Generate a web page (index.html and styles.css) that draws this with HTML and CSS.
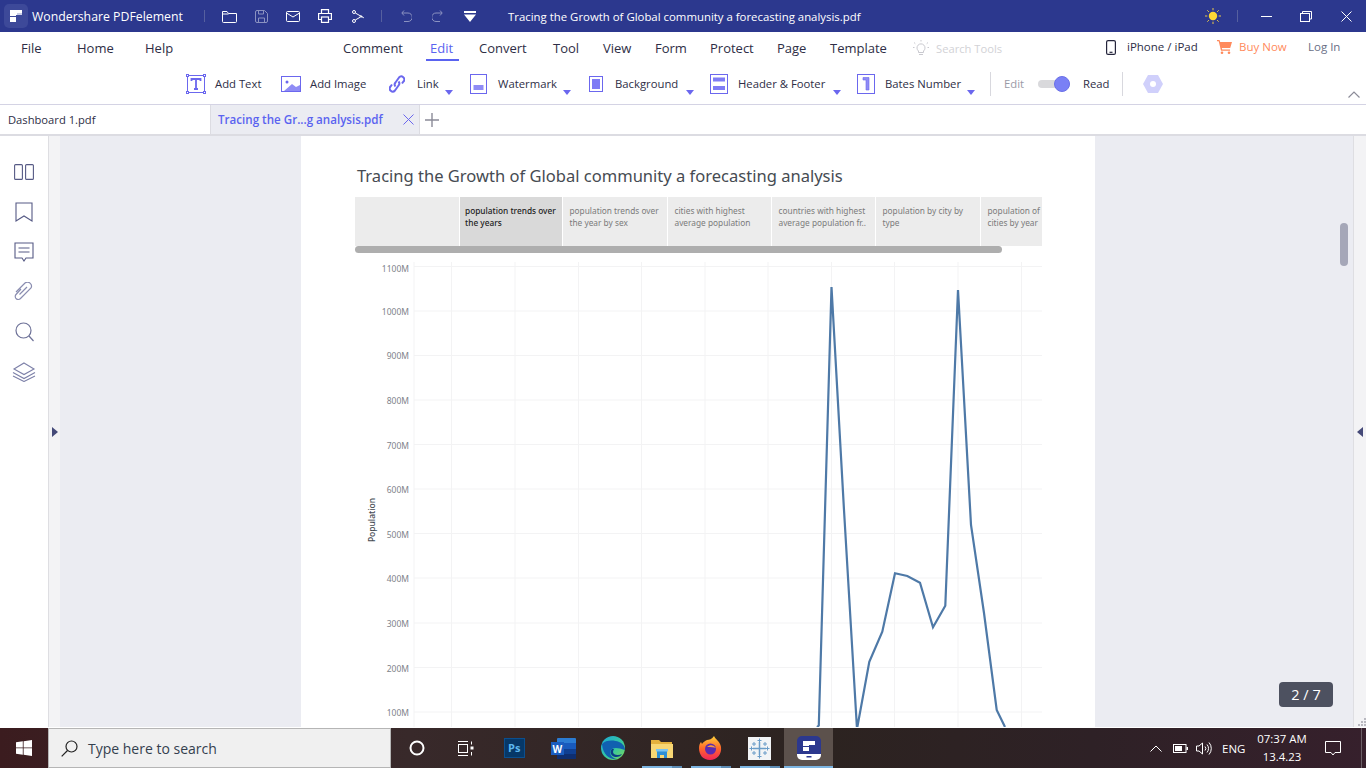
FILE: index.html
```html
<!DOCTYPE html>
<html lang="en">
<head>
<meta charset="utf-8">
<title>Wondershare PDFelement</title>
<link rel="stylesheet" href="styles.css">
</head>
<body>
<div class="app">
  <header class="titlebar">
    <svg class="ico" width="24" height="24" viewBox="0 0 24 24"><rect width="24" height="24" rx="5" fill="#3d4999"/><path d="M6 6h12v5h-6v1H6zM6 13h6v5H6z" fill="#fff"/><path d="M13 9h5v2h-5z" fill="#c9cde6"/></svg>
    <span class="appname">Wondershare PDFelement</span>
    <span class="tsep"></span>
    <svg class="ico" width="15" height="13" viewBox="0 0 15 13" fill="none" stroke="#fff"><path d="M.5 11V1.500h4.500l1.500 2h8v8a1 1 0 0 1-1 1h-12a1 1 0 0 1-1-1zM.5 4h6"/></svg>
    <svg class="ico dim" width="13" height="13" viewBox="0 0 13 13" fill="none" stroke="#fff"><path d="M.5 2a1.500 1.500 0 0 1 1.500-1.500h7.500l3 3V11a1.500 1.500 0 0 1-1.500 1.500H2A1.500 1.500 0 0 1 .5 11zM3.500.5v3.500h5V.5M3.500 12.500V8h6v4.500"/></svg>
    <svg class="ico" width="14" height="11" viewBox="0 0 14 11" fill="none" stroke="#fff"><rect x=".5" y=".5" width="13" height="10" rx="1"/><path d="M.5 2l6.500 4 6.500-4"/></svg>
    <svg class="ico" width="14" height="14" viewBox="0 0 14 14" fill="none" stroke="#fff" stroke-width="1.200"><path d="M3.500 4.500V.6h7v3.900M3.500 10.500H.6V4.500h12.800v6h-2.900"/><rect x="3.500" y="8" width="7" height="5.400"/></svg>
    <svg class="ico" width="12" height="13" viewBox="0 0 12 13" fill="none" stroke="#fff"><circle cx="2" cy="2" r="1.500"/><circle cx="2" cy="11" r="1.500"/><path d="M3.300 3l8.500 4.800M3.300 10l4.700-2.700"/><circle cx="9" cy="6.500" r=".8"/></svg>
    <span class="tsep"></span>
    <svg class="ico dim" width="11" height="12" viewBox="0 0 11 12" fill="none" stroke="#fff"><path d="M3 .5L.8 3 3 5.500M1 3h6a3.500 3.500 0 0 1 0 8.500H3"/></svg>
    <svg class="ico dim" width="11" height="12" viewBox="0 0 11 12" fill="none" stroke="#fff"><path d="M8 .5L10.200 3 8 5.500M10 3H4a3.500 3.500 0 0 0 0 8.500h4"/></svg>
    <svg class="ico" width="12" height="11" viewBox="0 0 12 11" fill="#fff"><path d="M0 0h12v2H0zM0 3.500h12L6 11z"/></svg>
    <span class="doctitle">Tracing the Growth of Global community a forecasting analysis.pdf</span>
    <svg class="ico" width="16" height="16" viewBox="0 0 16 16"><circle cx="8" cy="8" r="4.200" fill="#fdd835"/><path d="M8 0v2.300M8 13.700V16M0 8h2.300M13.700 8H16M2.300 2.300l1.600 1.600M12.100 12.100l1.600 1.600M2.300 13.700l1.600-1.600M12.100 3.900l1.600-1.600" stroke="#e9c84a" fill="none"/></svg>
    <span class="tsep"></span>
    <span class="win-min"></span>
    <svg class="ico" width="12" height="11" viewBox="0 0 12 11" fill="none" stroke="#fff"><path d="M2.500 2.500V.5h9v7.500H9.500"/><rect x=".5" y="2.500" width="9" height="8"/></svg>
    <svg class="ico" width="11" height="11" viewBox="0 0 11 11" fill="none" stroke="#fff"><path d="M.5.500l10 10M10.500.500l-10 10"/></svg>
  </header>

  <nav class="menubar">
    <span>File</span><span>Home</span><span>Help</span>
    <span>Comment</span><span class="active">Edit</span><span>Convert</span><span>Tool</span><span>View</span><span>Form</span><span>Protect</span><span>Page</span><span>Template</span>
    <svg class="ico" width="16" height="16" viewBox="0 0 16 16" fill="none" stroke="#c9c9cf"><path d="M5.500 11a4 4 0 1 1 5 0v1.500h-5zM6 14.500h4M8 0v1.500M1 2.500l1.300 1.200M15 2.500l-1.300 1.200M0 7.500h1.500M14.500 7.500H16"/></svg>
    <span class="searchtools">Search Tools</span>
    <svg class="ico phone" width="10" height="15" viewBox="0 0 10 15" fill="none" stroke="#25253c" stroke-width="1.200"><rect x=".6" y=".6" width="8.800" height="13.800" rx="1.500"/><path d="M3.500 12.300h3"/></svg>
    <span class="small">iPhone / iPad</span>
    <svg class="ico cart" width="15" height="14" viewBox="0 0 15 14" fill="#ff8a5c"><path d="M0 0h2.500l.7 2H15l-1.800 6H4.800l.4 1.500H13v1.200H4L1.700 1.200H0z"/><circle cx="5" cy="12.700" r="1.300"/><circle cx="12" cy="12.700" r="1.300"/></svg>
    <span class="small buy">Buy Now</span>
    <span class="small login">Log In</span>
  </nav>

  <div class="toolbar">
    <svg class="ico" width="20" height="20" viewBox="0 0 20 20" fill="none" stroke="#6b67ee"><rect x="1.500" y="1.500" width="17" height="17"/><g fill="#fff"><rect x=".5" y=".5" width="2" height="2"/><rect x="17.500" y=".5" width="2" height="2"/><rect x=".5" y="17.500" width="2" height="2"/><rect x="17.500" y="17.500" width="2" height="2"/></g><path d="M5.500 7V5h9v2M10 5v10M8 15h4" stroke-width="1.800"/></svg>
    <span>Add Text</span>
    <svg class="ico" width="20" height="16" viewBox="0 0 20 16"><rect x=".5" y=".5" width="19" height="15" fill="none" stroke="#6b67ee"/><circle cx="6" cy="6" r="1.500" fill="#6b67ee"/><path d="M3 15l8-7 4 3 4-2v6z" fill="#8f8cf5"/></svg>
    <span>Add Image</span>
    <svg class="ico" width="16" height="18" viewBox="0 0 16 18" fill="none" stroke="#6b67ee" stroke-width="2"><path d="M6.500 11.500a3 3 0 0 1 0-4l3.500-5a3 3 0 0 1 4.500 4l-1.500 2M9.500 6.500a3 3 0 0 1 0 4l-3.500 5a3 3 0 0 1-4.500-4l1.500-2"/></svg>
    <span>Link</span>
    <span class="caret"></span>
    <svg class="ico" width="17" height="20" viewBox="0 0 17 20"><rect x=".5" y=".5" width="16" height="19" fill="none" stroke="#6b67ee"/><rect x="3.500" y="11" width="10" height="5" fill="#8f8cf5"/></svg>
    <span>Watermark</span>
    <span class="caret"></span>
    <svg class="ico" width="14" height="16" viewBox="0 0 14 16"><rect x=".5" y=".5" width="13" height="15" fill="none" stroke="#6b67ee"/><rect x="3" y="3" width="8" height="10" fill="#7f7cf5"/></svg>
    <span>Background</span>
    <span class="caret"></span>
    <svg class="ico" width="18" height="20" viewBox="0 0 18 20"><rect x=".5" y=".5" width="17" height="19" fill="none" stroke="#6b67ee"/><rect x="3" y="3.500" width="12" height="4" fill="#7f7cf5"/><rect x="3" y="12" width="12" height="4" fill="#7f7cf5"/></svg>
    <span>Header &amp; Footer</span>
    <span class="caret"></span>
    <svg class="ico" width="18" height="20" viewBox="0 0 18 20"><rect x=".5" y=".5" width="17" height="19" fill="none" stroke="#6b67ee"/><path d="M6 3.500h6V16H9V6H6z" fill="#8f8cf5" stroke="#6b67ee" stroke-width=".6"/></svg>
    <span>Bates Number</span>
    <span class="caret"></span>
    <span class="bsep"></span>
    <span class="muted">Edit</span>
    <span class="toggle"><span class="knob"></span></span>
    <span>Read</span>
    <span class="bsep"></span>
    <svg class="ico" width="20" height="18" viewBox="0 0 20 18"><path d="M5 0h10l5 9-5 9H5L0 9z" fill="#d0d0fb"/><circle cx="10" cy="9" r="3" fill="#fff"/></svg>
    <svg class="ico collapse" width="12" height="7" viewBox="0 0 12 7" fill="none" stroke="#8b8b98" stroke-width="1.200"><path d="M.5 6.500L6 1l5.500 5.500"/></svg>
  </div>

  <div class="tabs">
    <span class="tab">Dashboard 1.pdf</span>
    <span class="tab current"><span class="tabname">Tracing the Gr...g analysis.pdf</span>
      <svg class="ico" width="11" height="11" viewBox="0 0 11 11" fill="none" stroke="#6b67ee"><path d="M.5.500l10 10M10.500.500l-10 10"/></svg></span>
    <svg class="ico plus" width="14" height="14" viewBox="0 0 14 14" stroke="#8b8b98" stroke-width="1.400"><path d="M7 0v14M0 7h14"/></svg>
  </div>

  <div class="workspace">
    <aside class="sidebar">
      <svg width="20" height="16" viewBox="0 0 20 16" fill="none" stroke="#565a85" stroke-width="1.100"><rect x=".6" y=".6" width="7.800" height="14.800" rx="1"/><rect x="11.600" y=".6" width="7.800" height="14.800" rx="1"/></svg>
      <svg width="18" height="20" viewBox="0 0 18 20" fill="none" stroke="#565a85" stroke-width="1.100"><path d="M1 1h16v18l-8-5-8 5z"/></svg>
      <svg width="20" height="20" viewBox="0 0 20 20" fill="none" stroke="#565a85" stroke-width="1.100"><path d="M1 1h18v15h-7l-2 3-2-3H1zM4.500 6h11M4.500 10h11"/></svg>
      <svg width="22" height="20" viewBox="0 0 22 20" fill="none" stroke="#8a8db0" stroke-width="1.200"><path d="M8 7l-5 5.500a3 3 0 0 0 4.500 4L18 6a4 4 0 0 0-6-5L3 10M6.500 12.500L14 5"/></svg>
      <svg width="19" height="20" viewBox="0 0 19 20" fill="none" stroke="#6f7399" stroke-width="1.200"><circle cx="8.500" cy="8.500" r="7.500"/><path d="M14 14l4.500 5"/></svg>
      <svg width="24" height="20" viewBox="0 0 24 20" fill="none" stroke="#7d80a8" stroke-width="1.100"><path d="M12 1l10 6-10 5.500L2 7zM1 10.500l11 6 11-6M1 14l11 5.500L23 14"/></svg>
    </aside>
    <div class="strip"><span class="tri-right"></span></div>
    <main class="canvas">
      <article class="page">
        <h1 class="charttitle">Tracing the Growth of Global community a forecasting analysis</h1>
        <div class="sheets">
          <span class="sheet blank"></span>
          <span class="sheet selected">population trends over the years</span>
          <span class="sheet">population trends over the year by sex</span>
          <span class="sheet">cities with highest average population</span>
          <span class="sheet">countries with highest average population fr..</span>
          <span class="sheet">population by city by type</span>
          <span class="sheet">population of cities by year</span>
        </div>
        <div class="hscroll"></div>
        <svg class="chart" width="700" height="474" viewBox="355 253 700 474">
          <g class="grid">
            <path d="M414 266.500H1042M414 311H1042M414 355.500H1042M414 400H1042M414 444.500H1042M414 489H1042M414 533.500H1042M414 578H1042M414 623H1042M414 667.500H1042M414 712H1042"/>
            <path d="M414 262V727M451.500 262V727M515 262V727M578.500 262V727M641.500 262V727M705 262V727M768 262V727M831.500 262V727M894.500 262V727M958 262V727M1021.500 262V727"/>
          </g>
          <g class="ylabels">
            <text x="409" y="272">1100M</text><text x="409" y="315">1000M</text><text x="409" y="359">900M</text><text x="409" y="404">800M</text><text x="409" y="449">700M</text><text x="409" y="493">600M</text><text x="409" y="538">500M</text><text x="409" y="582">400M</text><text x="409" y="627">300M</text><text x="409" y="672">200M</text><text x="409" y="716">100M</text>
          </g>
          <text class="ytitle" transform="translate(375 520) rotate(-90)">Population</text>
          <path class="series" d="M817 727L818.800 725.500L831.500 287L844 510L857 729L869.300 661.700L882.300 631.700L895 573.300L907.300 576L920 582.700L933 627.300L945.300 605.700L958 290L971 525L984 613L996.700 710L1005 727"/>
        </svg>
      </article>
      <div class="vscroll"></div>
      <div class="pagechip">2 / 7</div>
    </main>
    <div class="strip right"><span class="tri-left"></span>
      <svg class="grip" width="8" height="8" viewBox="0 0 8 8" fill="#b9b9c0"><path d="M6 0h2v2H6zM3 3h2v2H3zM6 3h2v2H6zM0 6h2v2H0zM3 6h2v2H3zM6 6h2v2H6z"/></svg>
    </div>
  </div>
  <div class="gapline"></div>

  <footer class="taskbar">
    <span class="startbtn"><svg width="16" height="16" viewBox="0 0 16 16" fill="#fff"><path d="M0 2.300L6.800 1.300V7.500H0zM7.600 1.200L16 0V7.500H7.600zM0 8.300H6.800V14.700L0 13.700zM7.600 8.300H16V16L7.600 14.800z"/></svg></span>
    <div class="searchbox">
      <svg width="17" height="17" viewBox="0 0 17 17" fill="none" stroke="#222" stroke-width="1.200"><circle cx="10.500" cy="6.500" r="5.500"/><path d="M6.500 10.500L.7 16.300"/></svg>
      <span>Type here to search</span>
    </div>
    <div class="apps">
      <span class="app-cell"><svg width="16" height="16" viewBox="0 0 16 16" fill="none" stroke="#fff" stroke-width="2"><circle cx="8" cy="8" r="6.500"/></svg></span>
      <span class="app-cell"><svg width="17" height="15" viewBox="0 0 17 15" fill="none" stroke="#fff"><path d="M1 .5h10M1 14.500h10"/><rect x="1.500" y="3.500" width="9" height="8"/><path d="M14.500 .500v3M14.500 11v3.500"/><rect x="13.500" y="5.500" width="3" height="3" fill="#fff" stroke="none"/></svg></span>
      <span class="app-cell"><svg width="22" height="21" viewBox="0 0 22 21"><rect width="21" height="20" fill="#0a4f8f"/><rect x="1" y="1" width="19" height="18" fill="#063868"/><text x="4" y="14" class="psmark">Ps</text></svg></span>
      <span class="app-cell"><svg width="25" height="21" viewBox="0 0 25 21"><rect x="6" width="19" height="21" rx="1" fill="#2b7cd3"/><rect x="6" y="5" width="19" height="6" fill="#185abd"/><rect x="6" y="11" width="19" height="5" fill="#103f91"/><rect x="6" y="16" width="19" height="5" fill="#0e2e70"/><rect y="4" width="13" height="13" fill="#1a5dc0"/><text x="1.500" y="14.500" class="wmark">W</text></svg></span>
      <span class="app-cell"><svg width="24" height="24" viewBox="0 0 24 24"><defs><linearGradient id="eg" x1="0" y1="0" x2="1" y2="1"><stop offset="0" stop-color="#1aa7d8"/><stop offset=".55" stop-color="#36c8a0"/><stop offset="1" stop-color="#7ed957"/></linearGradient></defs><circle cx="12" cy="12" r="12" fill="url(#eg)"/><path d="M1 8c1 12 9 16 15 15C10 22 7 16 11 13c3-2 7-1 13 1 0 0 0-2-1-4C20 4 6 2 1 8z" fill="#1160b0"/><path d="M11 13c-3 3-1 7 3 8 3 .5 6-1 7-3-4 2-9 1-9-2 0-1 .5-2 1-3z" fill="#0c3e86"/></svg></span>
      <span class="app-cell"><svg width="22" height="19" viewBox="0 0 22 19"><path d="M0 1h8l2 2h11v15H0z" fill="#e5b23e"/><rect y="5" width="22" height="14" fill="#f8d774"/><path d="M6 12h10v7h-3v-3H9v3H6z" fill="#2d8fd5"/><rect x="5" y="10" width="12" height="2.500" fill="#7cc4ef"/></svg></span>
      <span class="app-cell"><svg width="23" height="24" viewBox="0 0 23 24"><defs><linearGradient id="fg" x1="0" y1="0" x2="0" y2="1"><stop offset="0" stop-color="#ffd23a"/><stop offset=".5" stop-color="#ff6a2a"/><stop offset="1" stop-color="#f0245a"/></linearGradient></defs><path d="M15 0c1 3 6 5 7 11 1 7-4 13-11 13S0 19 0 12c0-3 1-5 2-6l1 2c1-2 3-3 5-4 2 0 5-1 7-4z" fill="url(#fg)"/><circle cx="11.500" cy="13" r="5.500" fill="#5b2ab0"/><path d="M8 11c3-3 7-2 9 1-2-1-5-1-9-1z" fill="#ff9a3a"/></svg></span>
      <span class="app-cell"><svg width="23" height="23" viewBox="0 0 23 23"><rect width="23" height="23" fill="#f2f4f6"/><g fill="none" stroke="#6a9cc8"><path d="M11.500 5v13M5 11.500h13" stroke-width="1.500"/><path d="M11.500 1.500v4M9.500 3.500h4M11.500 17.500v4M9.500 19.500h4M1.500 11.500h4M3.500 9.500v4M17.500 11.500h4M19.500 9.500v4M6 5v4M4 7h4M17 5v4M15 7h4M6 14v4M4 16h4M17 14v4M15 16h4"/></g></svg></span>
      <span class="app-cell active"><svg width="24" height="24" viewBox="0 0 24 24"><path d="M5 0h14a5 5 0 0 1 5 5v14H0V5a5 5 0 0 1 5-5z" fill="#2c388e"/><path d="M0 18h24v1a5 5 0 0 1-5 5H5a5 5 0 0 1-5-5z" fill="#fff"/><path d="M6 5h12v4h-6v1H6zM6 11h6v4H6z" fill="#fff"/><rect x="9.500" y="20" width="5" height="1.500" fill="#2c388e"/></svg></span>
    </div>
    <div class="tray">
      <svg class="ico chev" width="12" height="7" viewBox="0 0 12 7" fill="none" stroke="#fff"><path d="M.5 6.500L6 1l5.500 5.500"/></svg>
      <svg class="ico batt" width="15" height="9" viewBox="0 0 15 9"><rect x=".5" y=".5" width="12.500" height="8" fill="none" stroke="#fff"/><rect x="2" y="2" width="7" height="5" fill="#fff"/><rect x="13.500" y="3" width="1.500" height="3" fill="#fff"/></svg>
      <svg class="ico vol" width="16" height="13" viewBox="0 0 16 13" fill="none" stroke="#fff"><path d="M.5 4h2.500L6.500 1v11L3 9H.5zM9 4.500a3 3 0 0 1 0 4M11 2.500a6 6 0 0 1 0 8M13 .5a9 9 0 0 1 0 12"/></svg>
      <span class="eng">ENG</span>
      <div class="clock"><span>07:37 AM</span><span>13.4.23</span></div>
      <svg class="ico notif" width="16" height="15" viewBox="0 0 16 15" fill="none" stroke="#fff"><path d="M.5.500h15v11h-5.500L8 14 6 11.500H.5z"/></svg>
      <span class="showdesk"></span>
    </div>
  </footer>
</div>
</body>
</html>
```

FILE: styles.css
```css
* { box-sizing: border-box; }
html, body { margin: 0; padding: 0; }
body {
  width: 1366px;
  height: 768px;
  overflow: hidden;
  background: #fff;
  font-family: "Open Sans", "Noto Sans", sans-serif;
  color: #2e2e46;
}
.app { display: flex; flex-direction: column; width: 1366px; height: 768px; }
.ico { display: block; }

.titlebar {
  height: 32px;
  background: #2c388e;
  color: #fff;
  font-size: 12.300px;
  display: grid;
  grid-template-columns: 28px 172px 18px 33px 31px 32px 34px 29px 20px 31px 32px 44px 697px 32px 24px 39px 41px 1fr;
  align-items: center;
  padding-left: 4px;
}
.dim { opacity: .45; }
.tsep { display: block; width: 1px; height: 12px; background: #56609f; }
.win-min { display: block; width: 11px; height: 1px; background: #fff; }
.appname { white-space: nowrap; }
.doctitle { white-space: nowrap; font-size: 11.400px; }

.menubar {
  height: 32px;
  display: grid;
  grid-template-columns: 56px 68px 198px 87px 49px 74px 50px 52px 55px 67px 53px 83px 23px 170px 21px 90px 22px 69px 1fr;
  align-items: center;
  padding-left: 21px;
  font-size: 13px;
  background: #fff;
}
.menubar > span { white-space: nowrap; }
.menubar .active { color: #5a63f0; position: relative; }
.menubar .active::after {
  content: "";
  position: absolute;
  left: -4px;
  width: 33px;
  bottom: -4px;
  height: 2px;
  background: #5a63f0;
}
.searchtools { font-size: 11.200px; color: #d2d2d6; }
.small { font-size: 11.500px; position: relative; top: -2px; }
.phone, .cart { position: relative; top: -1px; }
.buy { color: #ff8a5c; }
.login { color: #6a6f86; }

.toolbar {
  height: 41px;
  display: grid;
  grid-template-columns: 29px 66px 29px 79px 28px 27px 26px 28px 64px 27px 26px 70px 25px 28px 94px 25px 28px 81px 24px 14px 34px 45px 39px 21px 205px 1fr;
  align-items: center;
  padding-left: 186px;
  font-size: 11.300px;
  line-height: 14px;
  border-bottom: 1px solid #d4d3e4;
}
.toolbar > span { white-space: nowrap; }
.caret {
  display: block;
  width: 0;
  height: 0;
  border: 4px solid transparent;
  border-top: 5px solid #6b67ee;
  border-bottom: 0;
  align-self: end;
  margin-bottom: 9px;
  margin-left: 1px;
}
.bsep { display: block; width: 1px; height: 24px; background: #d8d8de; }
.muted { color: #9a9aa6; }
.toggle { display: block; width: 32px; height: 8px; border-radius: 4px; background: #d9d9dc; position: relative; }
.knob { position: absolute; right: 0; top: -4px; width: 16px; height: 16px; border-radius: 50%; background: #7a80f5; border: 1px solid #6a70e8; }
.collapse { align-self: end; margin-bottom: 6px; }

.tabs {
  height: 31px;
  display: flex;
  align-items: stretch;
  font-size: 11.200px;
  border-bottom: 2px solid #dcdce2;
}
.tab { width: 210px; display: flex; align-items: center; padding-left: 8px; white-space: nowrap; }
.tab.current {
  width: 210px;
  background: #ebecf2;
  color: #5a63f0;
  font-size: 11.600px;
  font-weight: 600;
  border-left: 1px solid #dcdce2;
  border-right: 1px solid #dcdce2;
  justify-content: space-between;
  padding: 0 5px 0 7px;
}
.plus { margin-left: 5px; align-self: center; }

.workspace { height: 591px; display: flex; }
.sidebar {
  width: 48px;
  display: flex;
  flex-direction: column;
  align-items: center;
  padding-top: 26px;
  gap: 20px;
}
.sidebar svg { height: 20px; }
.strip {
  position: relative;
  width: 12px;
  background: #f3f3f5;
  border-left: 1px solid #dedee2;
  display: flex;
  align-items: center;
  justify-content: center;
}
.strip.right { width: 13px; padding-right: 1px; }
.tri-right, .tri-left { width: 0; height: 0; border: 5px solid transparent; margin-top: 1px; }
.tri-right { border-left: 6px solid #454a78; border-right: 0; }
.tri-left { border-right: 6px solid #454a78; border-left: 0; }
.grip { position: absolute; right: 0; bottom: 1px; }

.canvas {
  position: relative;
  flex: 1;
  background: #ebecf2;
  overflow: hidden;
  padding-left: 241px;
}
.page {
  width: 794px;
  height: 591px;
  background: #fff;
  padding: 28px 0 0 54px;
  overflow: hidden;
}
.charttitle {
  margin: 0 0 9px 2px;
  font-family: "Noto Sans", "Open Sans", sans-serif;
  font-size: 16.550px;
  font-weight: 400;
  line-height: 24px;
  color: #464b52;
  white-space: nowrap;
}
.sheets {
  width: 687px;
  height: 49px;
  display: grid;
  grid-template-columns: 104px 103px 105px 104px 104px 105px 1fr;
  background: #ececec;
  overflow: hidden;
  font-family: "Noto Sans", "Open Sans", sans-serif;
  font-size: 8.300px;
  line-height: 12px;
  color: #7b7b7b;
}
.sheet {
  padding: 8px 1px 0 6.500px;
  border-left: 1px solid #fff;
}
.sheet.blank { border-left: 0; }
.sheet.selected { padding-left: 5px; background: #d9d9d9; color: #1c1c1c; font-weight: 500; }
.hscroll { width: 647px; height: 7px; border-radius: 4px; background: #aeaeae; }
.chart { display: block; }
.grid path { stroke: #f3f3f4; stroke-width: 1; fill: none; }
.ylabels text { font-family: "Noto Sans", sans-serif; font-size: 8.500px; fill: #80838a; text-anchor: end; }
.ytitle { font-family: "Noto Sans", sans-serif; font-size: 8.500px; font-weight: 500; fill: #454a52; text-anchor: middle; }
.series { fill: none; stroke: #4e79a7; stroke-width: 2.200; stroke-linejoin: miter; }

.vscroll { position: absolute; left: 1280px; top: 87px; width: 8px; height: 43px; border-radius: 4px; background: #a5a7b8; }
.pagechip {
  position: absolute;
  left: 1219px;
  top: 546px;
  width: 54px;
  height: 25px;
  border-radius: 4px;
  background: #4d5160;
  color: #fff;
  font-size: 14.500px;
  line-height: 25px;
  text-align: center;
}
.gapline { height: 1px; background: #fff; }

.taskbar {
  height: 40px;
  display: flex;
  background: linear-gradient(90deg, #3b1c1f 0, #38292a 30%, #2c2320 60%, #2e2126 80%, #36202c 100%);
  color: #fff;
}
.startbtn { width: 48px; display: flex; align-items: center; justify-content: center; }
.searchbox {
  width: 343px;
  background: #f0f0f0;
  border: 1px solid #b5b5b5;
  display: flex;
  align-items: center;
  gap: 10px;
  padding-left: 12px;
  color: #34404e;
  font-size: 14px;
}
.apps { display: flex; margin-left: 1px; }
.app-cell { position: relative; width: 49px; display: flex; align-items: center; justify-content: center; }
.app-cell:nth-child(n+4)::after {
  content: "";
  position: absolute;
  left: 5px;
  right: 4px;
  bottom: 0;
  height: 2px;
  background: linear-gradient(90deg, #7cb4e0 75%, #5d8cb4 75%);
}
.app-cell:nth-child(4)::after, .app-cell:nth-child(5)::after { display: none; }
.app-cell.active { background: #5c514c; }
.app-cell.active::after { left: 0; right: 0; background: #7cb4e0; }
.psmark { font-family: "Open Sans", sans-serif; font-size: 11px; font-weight: 700; fill: #5cb8f0; }
.wmark { font-family: "Open Sans", sans-serif; font-size: 10px; font-weight: 700; fill: #fff; }

.tray {
  margin-left: auto;
  display: grid;
  grid-template-columns: 23px 23px 26px 26px 77px 36px 1fr;
  align-items: center;
  width: 217px;
  padding-left: 1px;
}
.eng { font-size: 11.500px; }
.clock { display: flex; flex-direction: column; align-items: center; font-size: 11.400px; line-height: 18px; width: 68px; }
.showdesk { display: block; height: 40px; border-left: 1px solid #6b5f66; }
```
